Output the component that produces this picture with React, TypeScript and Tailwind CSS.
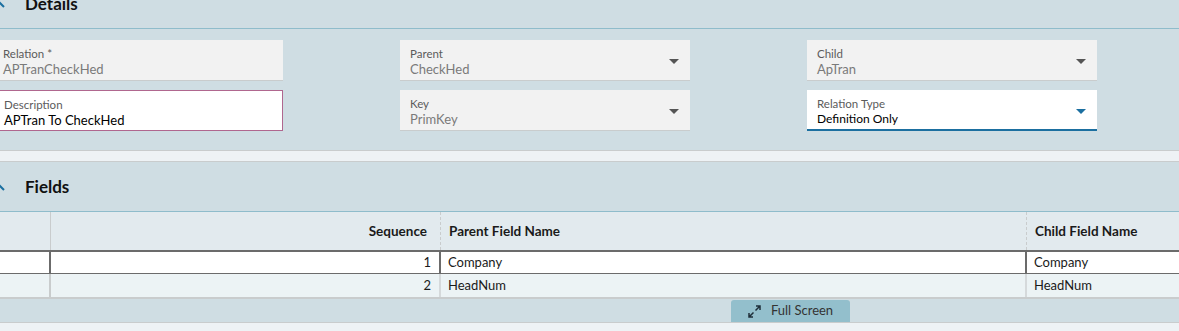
import React from 'react';

const font = { fontFamily: '"Lato", "Liberation Sans", sans-serif' };

function Chevron() {
  return (
    <svg width="12" height="8" viewBox="0 0 12 8">
      <path d="M1 7 L6 2 L11 7" fill="none" stroke="#1b6fa0" strokeWidth="2" />
    </svg>
  );
}

function Caret({ color = '#555' }: { color?: string }) {
  return (
    <svg width="10" height="5" viewBox="0 0 10 5" className="absolute right-[11px] top-[19px]">
      <path d="M0 0 H10 L5 5 Z" fill={color} />
    </svg>
  );
}

interface FieldProps {
  label: string;
  value: string;
  variant?: 'disabled' | 'focus' | 'active';
  dropdown?: boolean;
}

function Field({ label, value, variant = 'disabled', dropdown }: FieldProps) {
  const box =
    variant === 'focus'
      ? 'bg-white border border-[#b0678f]'
      : variant === 'active'
      ? 'bg-white border-b-2 border-[#1b6fa0]'
      : 'bg-[#f2f2f2] border-b border-[#c9cccd]';
  const valueCls =
    variant === 'disabled'
      ? 'text-[#7a7a7a] text-[13px]'
      : variant === 'active'
      ? 'text-black text-[12px]'
      : 'text-black text-[13px]';
  return (
    <div className={`relative h-[41px] pl-[10px] pt-[6px] ${box}`}>
      <div className="text-[11.5px] leading-[15px] text-[#5b5b5b]">{label}</div>
      <div className={`${valueCls} leading-[16px]`}>{value}</div>
      {dropdown && <Caret color={variant === 'active' ? '#1b6fa0' : '#555'} />}
    </div>
  );
}

function SectionHeader({ title }: { title: string }) {
  return (
    <div className="h-[50px] flex items-center gap-[20px] -ml-[7px] border-b border-[#8fbccb]">
      <Chevron />
      <span className="text-[17px] font-bold text-[#111]">{title}</span>
    </div>
  );
}

const rows = [
  { seq: 1, parent: 'Company', child: 'Company' },
  { seq: 2, parent: 'HeadNum', child: 'HeadNum' },
];

export default function App() {
  return (
    <div className="w-[1179px] h-[331px] overflow-hidden bg-[#eef2f5]" style={font}>
      <div className="-mt-[21px] bg-[#cfdde3]">
        <SectionHeader title="Details" />
        <div className="pt-[11px] pb-[19px] -ml-[7px]">
          <div className="grid grid-cols-[290px_290px_290px] gap-x-[117px] gap-y-[9px]">
            <Field label="Relation *" value="APTranCheckHed" />
            <Field label="Parent" value="CheckHed" dropdown />
            <Field label="Child" value="ApTran" dropdown />
            <Field label="Description" value="APTran To CheckHed" variant="focus" />
            <Field label="Key" value="PrimKey" dropdown />
            <Field label="Relation Type" value="Definition Only" variant="active" dropdown />
          </div>
        </div>
      </div>

      <div className="h-[12px] border-y border-[#c9cccd] bg-[#eef2f5]" />

      <div className="bg-[#cfdde3]">
        <SectionHeader title="Fields" />

        <div className="text-[#1a1a1a]">
          <div className="flex h-[38px] bg-[#e2eaee] text-[13.5px] font-bold items-center">
            <div className="w-[51px] h-full border-r border-[#c9cccd]" />
            <div className="w-[390px] h-full flex items-center justify-end pr-[13px] border-r border-dashed border-[#c9cccd]">
              Sequence
            </div>
            <div className="w-[586px] h-full flex items-center pl-[8px] border-r border-dashed border-[#c9cccd]">
              Parent Field Name
            </div>
            <div className="flex-1 h-full flex items-center pl-[8px]">Child Field Name</div>
          </div>

          {rows.map((r, i) => {
            const sel = i === 0;
            return (
              <div
                key={r.seq}
                className={`flex text-[13px] items-center ${
                  sel
                    ? 'h-[25px] bg-white border-y-2 border-[#6b6b6b]'
                    : 'h-[25px] bg-[#ecf3f5] border-b-2 border-[#c9cccd] -mt-[1px]'
                }`}
              >
                <div className={`w-[51px] h-full border-r-2 ${sel ? 'border-[#6b6b6b]' : 'border-[#c9cccd]'}`} />
                <div
                  className={`w-[390px] h-full flex items-center justify-end pr-[8px] border-r-2 ${
                    sel ? 'border-[#6b6b6b]' : 'border-[#d5d9db]'
                  }`}
                >
                  {r.seq}
                </div>
                <div
                  className={`w-[586px] h-full flex items-center pl-[7px] border-r-2 ${
                    sel ? 'border-[#6b6b6b]' : 'border-[#d5d9db]'
                  }`}
                >
                  {r.parent}
                </div>
                <div className="flex-1 h-full flex items-center pl-[7px]">{r.child}</div>
              </div>
            );
          })}
        </div>

        <div className="h-[24px] flex border-b border-[#c9cccd]">
          <button
            type="button"
            className="ml-[731px] mt-[1px] h-[22px] w-[119px] bg-[#93bfcc] rounded-t-[3px] flex items-center justify-center gap-[10px] text-[13px] text-[#333]"
          >
            <svg width="13" height="13" viewBox="0 0 13 13">
              <path d="M8 1 H12 V5 M12 1 L7.5 5.5 M5 12 H1 V8 M1 12 L5.5 7.5" fill="none" stroke="#1f2f3a" strokeWidth="1.5" />
            </svg>
            Full Screen
          </button>
        </div>
      </div>
    </div>
  );
}
